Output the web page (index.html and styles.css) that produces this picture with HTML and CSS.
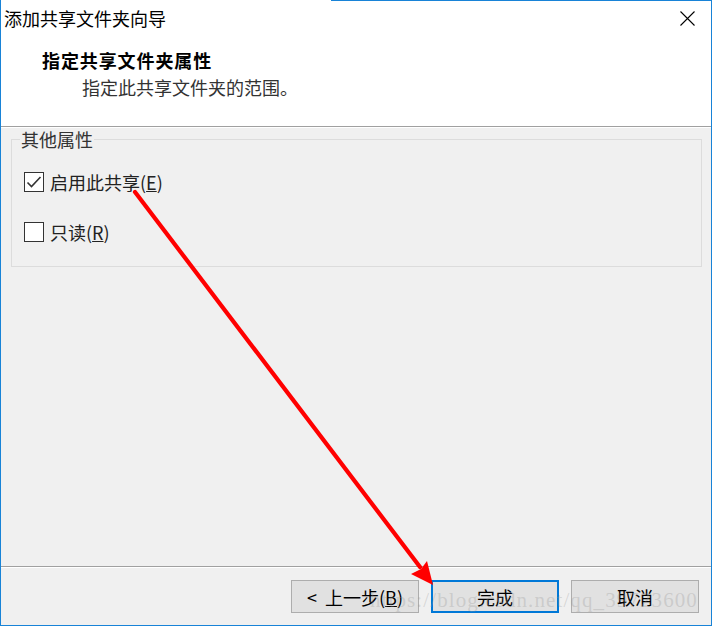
FILE: index.html
```html
<!DOCTYPE html>
<html lang="zh-CN">
<head>
<meta charset="utf-8">
<title>添加共享文件夹向导</title>
<link rel="stylesheet" href="styles.css">
</head>
<body>
<div class="window">
  <div class="header">
    <div class="titlebar">
      <span class="title">添加共享文件夹向导</span>
      <svg class="close" width="15" height="15" viewBox="0 0 15 15"><path d="M0.5 0.5 L14.5 14.5 M14.5 0.5 L0.5 14.5" stroke="#000" stroke-width="1.1" fill="none"/></svg>
    </div>
    <div class="heading">
      <div class="heading-main">指定共享文件夹属性</div>
      <div class="heading-sub">指定此共享文件夹的范围。</div>
    </div>
  </div>
  <div class="body">
    <fieldset class="group">
      <legend class="group-label">其他属性</legend>
      <div class="option">
        <span class="checkbox"><svg width="18" height="18" viewBox="0 0 18 18"><path d="M2.5 9.5 L6.5 13.5 L15.5 4" stroke="#333" stroke-width="1.6" fill="none"/></svg></span>
        <span class="option-text">启用此共享(<u>E</u>)</span>
      </div>
      <div class="option">
        <span class="checkbox"></span>
        <span class="option-text">只读(<u>R</u>)</span>
      </div>
    </fieldset>
  </div>
  <div class="footer">
    <button class="btn"><span class="lt">&lt;</span>上一步(<u>B</u>)</button>
    <button class="btn btn-default">完成</button>
    <button class="btn">取消</button>
  </div>
  <svg class="arrow" width="712" height="626" viewBox="0 0 712 626">
    <line x1="135" y1="192" x2="420" y2="567" stroke="#ff0000" stroke-width="4.2" stroke-linecap="round"/>
    <polygon points="433,585 411,574 421,569 427,561" fill="#ff0000"/>
  </svg>
  <div class="watermark">https://blog.csdn.net/qq_39723600</div>
</div>
</body>
</html>
```

FILE: styles.css
```css
* { box-sizing: border-box; }
html, body { margin: 0; padding: 0; }
body {
  width: 712px;
  height: 626px;
  overflow: hidden;
  background: #f0f0f0;
  font-family: "Noto Sans CJK SC", "Noto Sans", sans-serif;
}
.window {
  position: relative;
  width: 712px;
  height: 626px;
  display: flex;
  flex-direction: column;
  border-left: 1px solid #1883d7;
  border-right: 1px solid #1883d7;
  border-bottom: 1px solid #1883d7;
  background: #f0f0f0;
}
.window::before {
  content: "";
  position: absolute;
  top: 0;
  left: 330px;
  right: -1px;
  height: 1px;
  background: #1883d7;
}
.header {
  height: 127px;
  flex: none;
  background: #fff;
  border-bottom: 1px solid #a0a0a0;
}
.titlebar {
  height: 36px;
  display: flex;
  align-items: center;
  justify-content: space-between;
  padding-left: 3px;
  padding-right: 16px;
}
.title {
  font-size: 18px;
  line-height: 22px;
  color: #000;
}
.close { display: block; margin-top: 1px; }
.heading {
  padding-left: 41px;
  margin-top: 11px;
}
.heading-main {
  font-size: 18px;
  line-height: 27px;
  font-weight: bold;
  letter-spacing: 0.9px;
  color: #000;
}
.heading-sub {
  font-size: 18px;
  line-height: 27px;
  padding-left: 40px;
  color: #333;
}
.body {
  flex: 1;
  border-top: 1px solid #fff;
  border-bottom: 1px solid #a0a0a0;
  padding: 0 9px 0 10px;
}
.group {
  margin: 0;
  padding: 0 0 19px 12px;
  border: 1px solid #dcdcdc;
  min-width: 0;
}
.group-label {
  margin-left: -4px;
  padding: 0 1px;
  font-size: 18px;
  line-height: 22px;
  color: #333;
}
.option {
  display: flex;
  align-items: center;
  height: 30px;
  gap: 6px;
  margin-top: 17px;
}
.option + .option { margin-top: 20px; }
.checkbox {
  width: 20px;
  height: 20px;
  border: 1px solid #333;
  background: #fff;
  display: flex;
  align-items: center;
  justify-content: center;
}
.checkbox svg { display: block; }
.option-text {
  font-size: 18px;
  line-height: 22px;
  color: #222;
}
.footer {
  height: 58px;
  flex: none;
  border-top: 1px solid #fff;
  display: flex;
  justify-content: flex-end;
  align-items: flex-start;
  gap: 12px;
  padding: 12px 12px 0 0;
}
.btn {
  width: 128px;
  height: 33px;
  border: 1px solid #adadad;
  background: #e1e1e1;
  font-family: "Noto Sans CJK SC", "Noto Sans", sans-serif;
  font-size: 18px;
  line-height: 22px;
  color: #000;
  padding: 0;
}
.lt { margin-right: 8px; }
.btn-default {
  border: 2px solid #0078d7;
}
.arrow {
  position: absolute;
  left: -1px;
  top: 0;
  pointer-events: none;
}
.watermark {
  position: absolute;
  left: 369px;
  top: 588px;
  font-family: "Liberation Serif", serif;
  font-size: 21px;
  letter-spacing: 1.1px;
  line-height: 24px;
  color: rgba(150, 150, 150, 0.3);
  white-space: nowrap;
  pointer-events: none;
}
```
